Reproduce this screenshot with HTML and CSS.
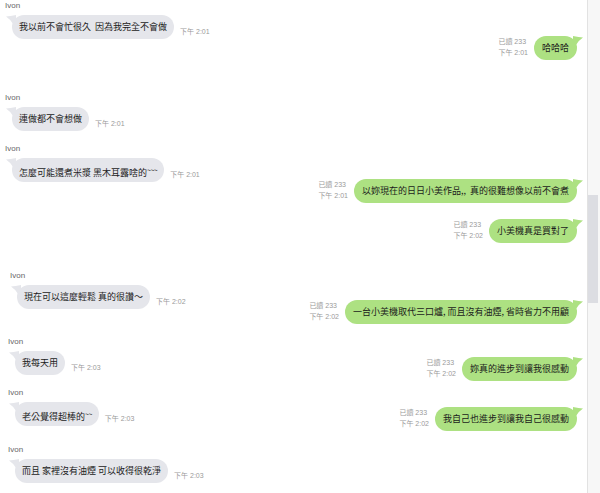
FILE: index.html
```html
<!DOCTYPE html>
<html lang="zh-Hant">
<head>
<meta charset="utf-8">
<title>Ivon</title>
<link rel="stylesheet" href="styles.css">
</head>
<body>
<div class="window">
  <main class="chat">
    <section class="col col-left">
      <div class="msg-in">
        <div class="name">Ivon</div>
        <div class="line">
          <div class="bubble gray">我以前不會忙很久&nbsp; 因為我完全不會做<svg class="tail" viewBox="0 0 10 10"><path d="M10 0 Q4 1.2 0 1.5 Q4 4 7 9 L10 9 Z"/></svg></div>
          <span class="time">下午 2:01</span>
        </div>
      </div>
      <div class="msg-in gap-54">
        <div class="name">Ivon</div>
        <div class="line">
          <div class="bubble gray">連做都不會想做<svg class="tail" viewBox="0 0 10 10"><path d="M10 0 Q4 1.2 0 1.5 Q4 4 7 9 L10 9 Z"/></svg></div>
          <span class="time">下午 2:01</span>
        </div>
      </div>
      <div class="msg-in gap-13">
        <div class="name">Ivon</div>
        <div class="line">
          <div class="bubble gray">怎麼可能還煮米漿 黑木耳露啥的<span class="hi">~~~</span><svg class="tail" viewBox="0 0 10 10"><path d="M10 0 Q4 1.2 0 1.5 Q4 4 7 9 L10 9 Z"/></svg></div>
          <span class="time">下午 2:01</span>
        </div>
      </div>
      <div class="msg-in gap-89 indent-b">
        <div class="name">Ivon</div>
        <div class="line">
          <div class="bubble gray">現在可以這麼輕鬆 真的很讚～<svg class="tail" viewBox="0 0 10 10"><path d="M10 0 Q4 1.2 0 1.5 Q4 4 7 9 L10 9 Z"/></svg></div>
          <span class="time">下午 2:02</span>
        </div>
      </div>
      <div class="msg-in gap-28 indent-c">
        <div class="name">Ivon</div>
        <div class="line">
          <div class="bubble gray">我每天用<svg class="tail" viewBox="0 0 10 10"><path d="M10 0 Q4 1.2 0 1.5 Q4 4 7 9 L10 9 Z"/></svg></div>
          <span class="time">下午 2:03</span>
        </div>
      </div>
      <div class="msg-in gap-13 indent-c">
        <div class="name">Ivon</div>
        <div class="line">
          <div class="bubble gray">老公覺得超棒的<span class="hi">~~</span><svg class="tail" viewBox="0 0 10 10"><path d="M10 0 Q4 1.2 0 1.5 Q4 4 7 9 L10 9 Z"/></svg></div>
          <span class="time">下午 2:03</span>
        </div>
      </div>
      <div class="msg-in gap-19 indent-c">
        <div class="name">Ivon</div>
        <div class="line">
          <div class="bubble gray">而且 家裡沒有油煙 可以收得很乾淨<svg class="tail" viewBox="0 0 10 10"><path d="M10 0 Q4 1.2 0 1.5 Q4 4 7 9 L10 9 Z"/></svg></div>
          <span class="time">下午 2:03</span>
        </div>
      </div>
    </section>

    <section class="col col-right">
      <div class="msg-out">
        <div class="meta"><span>已讀 233</span><span>下午 2:01</span></div>
        <div class="bubble green">哈哈哈<svg class="tail" viewBox="0 0 10 10"><path d="M0 0 Q6 1.2 10 1.5 Q6 4 3 9 L0 9 Z"/></svg></div>
      </div>
      <div class="msg-out gap-119">
        <div class="meta"><span>已讀 233</span><span>下午 2:01</span></div>
        <div class="bubble green">以妳現在的日日小美作品,,&nbsp; 真的很難想像以前不會煮<svg class="tail" viewBox="0 0 10 10"><path d="M0 0 Q6 1.2 10 1.5 Q6 4 3 9 L0 9 Z"/></svg></div>
      </div>
      <div class="msg-out gap-16">
        <div class="meta"><span>已讀 233</span><span>下午 2:02</span></div>
        <div class="bubble green">小美機真是買對了<svg class="tail" viewBox="0 0 10 10"><path d="M0 0 Q6 1.2 10 1.5 Q6 4 3 9 L0 9 Z"/></svg></div>
      </div>
      <div class="msg-out gap-57">
        <div class="meta"><span>已讀 233</span><span>下午 2:02</span></div>
        <div class="bubble green">一台小美機取代三口爐, 而且沒有油煙, 省時省力不用顧<svg class="tail" viewBox="0 0 10 10"><path d="M0 0 Q6 1.2 10 1.5 Q6 4 3 9 L0 9 Z"/></svg></div>
      </div>
      <div class="msg-out gap-33">
        <div class="meta"><span>已讀 233</span><span>下午 2:02</span></div>
        <div class="bubble green">妳真的進步到讓我很感動<svg class="tail" viewBox="0 0 10 10"><path d="M0 0 Q6 1.2 10 1.5 Q6 4 3 9 L0 9 Z"/></svg></div>
      </div>
      <div class="msg-out gap-26">
        <div class="meta"><span>已讀 233</span><span>下午 2:02</span></div>
        <div class="bubble green">我自己也進步到讓我自己很感動<svg class="tail" viewBox="0 0 10 10"><path d="M0 0 Q6 1.2 10 1.5 Q6 4 3 9 L0 9 Z"/></svg></div>
      </div>
    </section>
  </main>
  <div class="scrollbar"><div class="thumb"></div></div>
</div>
</body>
</html>
```

FILE: styles.css
```css
* { box-sizing: border-box; }

html, body {
  margin: 0;
  height: 100%;
}

body {
  background: #ffffff;
  overflow: hidden;
  font-family: "Noto Sans CJK TC", "Noto Sans CJK SC", sans-serif;
}

.window {
  display: flex;
  height: 493px;
}

.chat {
  flex: 1;
  display: grid;
  grid-template-columns: 1fr 1fr;
}

.col {
  display: flex;
  flex-direction: column;
}

.col-left {
  align-items: flex-start;
  padding: 1px 0 0 5px;
}

.col-right {
  align-items: flex-end;
  padding: 36px 10px 0 0;
}

/* incoming */
.name {
  font: 8px/10px "Liberation Sans", sans-serif;
  color: #666666;
}

.line {
  display: flex;
  align-items: flex-end;
  gap: 6px;
  margin: 4px 0 0 7px;
}

.indent-b { margin-left: 5px; }
.indent-c { margin-left: 3px; }

.bubble {
  position: relative;
  height: 24px;
  padding: 0 7px;
  border-radius: 12px;
  font-size: 9px;
  line-height: 24px;
  color: #1b1b1b;
  white-space: nowrap;
}

.bubble.green {
  padding: 0 8px;
}

.gray { background: #e5e6eb; }
.green { background: #ade182; }

.tail {
  position: absolute;
  top: 0;
  width: 10px;
  height: 10px;
}

.gray .tail { left: -6px; fill: #e5e6eb; }
.green .tail { right: -6px; fill: #ade182; }

.hi {
  font-size: 7px;
  letter-spacing: -0.5px;
  vertical-align: 3px;
}

.time {
  font: 7px/10px "Liberation Sans", "Noto Sans CJK TC", sans-serif;
  color: #9a9a9a;
  margin-bottom: 2px;
  white-space: nowrap;
}

/* outgoing */
.msg-out {
  display: flex;
  align-items: flex-end;
  gap: 6px;
}

.meta {
  display: flex;
  flex-direction: column;
  font: 7px/10.5px "Liberation Sans", "Noto Sans CJK TC", sans-serif;
  color: #9a9a9a;
  margin-bottom: 2px;
  white-space: nowrap;
}

/* vertical rhythm between messages */
.gap-13 { margin-top: 13px; }
.gap-16 { margin-top: 16px; }
.gap-19 { margin-top: 19px; }
.gap-26 { margin-top: 26px; }
.gap-28 { margin-top: 28px; }
.gap-33 { margin-top: 33px; }
.gap-54 { margin-top: 54px; }
.gap-57 { margin-top: 57px; }
.gap-89 { margin-top: 89px; }
.gap-119 { margin-top: 119px; }

/* scrollbar */
.scrollbar {
  width: 13px;
  border-left: 1px solid #e2e2e2;
  background: #f7f7f7;
  padding-top: 195px;
}

.thumb {
  width: 10px;
  height: 108px;
  background: #dcdde2;
}
```
